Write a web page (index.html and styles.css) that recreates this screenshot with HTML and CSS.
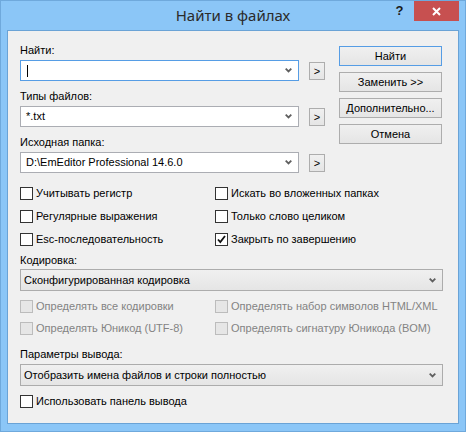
FILE: index.html
```html
<!DOCTYPE html>
<html lang="ru">
<head>
    <meta charset="UTF-8">
    <title>Найти в файлах</title>
    <link rel="stylesheet" href="styles.css">
</head>
<body>
    <div class="window">
        <div class="titlebar">
            <span></span>
            <div class="title">Найти в файлах</div>
            <div class="caption-buttons">
                <span class="help">?</span>
                <span class="close">
                    <svg width="9" height="9" viewBox="0 0 9 9"><path d="M1 1 L8 8 M8 1 L1 8" stroke="#fff" stroke-width="2"/></svg>
                </span>
            </div>
        </div>

        <div class="client">
            <div class="top">
                <div class="fields">
                    <div class="field">
                        <div class="label">Найти:</div>
                        <div class="field-row">
                            <div class="combo focused"><span class="caret"></span>
                                <svg class="chevron" width="7" height="5" viewBox="0 0 7 5"><path d="M0.7 0.7 L3.5 3.5 L6.3 0.7" fill="none" stroke="#5f5f5f" stroke-width="1.8"/></svg>
                            </div>
                            <button class="more">&gt;</button>
                        </div>
                    </div>
                    <div class="field">
                        <div class="label">Типы файлов:</div>
                        <div class="field-row">
                            <div class="combo"><span class="value">*.txt</span>
                                <svg class="chevron" width="7" height="5" viewBox="0 0 7 5"><path d="M0.7 0.7 L3.5 3.5 L6.3 0.7" fill="none" stroke="#5f5f5f" stroke-width="1.8"/></svg>
                            </div>
                            <button class="more">&gt;</button>
                        </div>
                    </div>
                    <div class="field">
                        <div class="label">Исходная папка:</div>
                        <div class="field-row">
                            <div class="combo"><span class="value">D:\EmEditor Professional 14.6.0</span>
                                <svg class="chevron" width="7" height="5" viewBox="0 0 7 5"><path d="M0.7 0.7 L3.5 3.5 L6.3 0.7" fill="none" stroke="#5f5f5f" stroke-width="1.8"/></svg>
                            </div>
                            <button class="more">&gt;</button>
                        </div>
                    </div>
                </div>

                <div class="actions">
                    <button class="btn default">Найти</button>
                    <button class="btn">Заменить &gt;&gt;</button>
                    <button class="btn">Дополнительно...</button>
                    <button class="btn">Отмена</button>
                </div>
            </div>

            <div class="options">
                <div class="check"><span class="box"></span>Учитывать регистр</div>
                <div class="check"><span class="box"></span>Искать во вложенных папках</div>
                <div class="check"><span class="box"></span>Регулярные выражения</div>
                <div class="check"><span class="box"></span>Только слово целиком</div>
                <div class="check"><span class="box"></span>Esc-последовательность</div>
                <div class="check"><span class="box">
                    <svg width="11" height="11" viewBox="0 0 11 11"><path d="M2 5.5 L4.3 8 L9 2" fill="none" stroke="#111" stroke-width="1.8"/></svg>
                </span>Закрыть по завершению</div>
            </div>

            <div class="label section-label">Кодировка:</div>
            <div class="dropdown">
                <span class="value">Сконфигурированная кодировка</span>
                <svg class="chevron" width="7" height="5" viewBox="0 0 7 5"><path d="M0.7 0.7 L3.5 3.5 L6.3 0.7" fill="none" stroke="#5f5f5f" stroke-width="1.8"/></svg>
            </div>

            <div class="options disabled">
                <div class="check"><span class="box"></span>Определять все кодировки</div>
                <div class="check"><span class="box"></span>Определять набор символов HTML/XML</div>
                <div class="check"><span class="box"></span>Определять Юникод (UTF-8)</div>
                <div class="check"><span class="box"></span>Определять сигнатуру Юникода (BOM)</div>
            </div>

            <div class="label output-label">Параметры вывода:</div>
            <div class="dropdown">
                <span class="value">Отобразить имена файлов и строки полностью</span>
                <svg class="chevron" width="7" height="5" viewBox="0 0 7 5"><path d="M0.7 0.7 L3.5 3.5 L6.3 0.7" fill="none" stroke="#5f5f5f" stroke-width="1.8"/></svg>
            </div>

            <div class="check last"><span class="box"></span>Использовать панель вывода</div>
        </div>
    </div>
</body>
</html>
```

FILE: styles.css
```css
body {
    margin: 0;
    font-family: "Liberation Sans", Arial, sans-serif;
    font-size: 11px;
    color: #000;
}

.window {
    width: 466px;
    height: 432px;
    box-sizing: border-box;
    border: 1px solid #6fa9dc;
    background: #8bc6f7;
    padding: 0 6px 7px;
    display: flex;
    flex-direction: column;
}

/* title bar */
.titlebar {
    height: 29px;
    flex-shrink: 0;
    display: grid;
    grid-template-columns: 1fr auto 1fr;
}

.title {
    font-family: "Noto Sans", "Open Sans", sans-serif;
    font-size: 15px;
    line-height: 29px;
    color: #2b2b2b;
}

.caption-buttons {
    justify-self: end;
    display: flex;
    align-items: flex-start;
}

.help {
    width: 27px;
    margin-right: 1px;
    height: 20px;
    line-height: 20px;
    text-align: center;
    font-weight: bold;
    font-size: 13px;
    color: #1a1a1a;
}

.close {
    width: 45px;
    height: 20px;
    background: #c75050;
    display: flex;
    align-items: center;
    justify-content: center;
}

/* client area */
.client {
    flex: 1;
    background: #f0f0f0;
    border: 1px solid #6aa3d6;
    padding: 13px 16px 0 12px;
}

.label {
    line-height: 13px;
    height: 13px;
}

.top {
    display: flex;
}

.fields {
    width: 305px;
}

.field {
    display: flex;
    flex-direction: column;
    gap: 3px;
}

.field + .field {
    margin-top: 9px;
}

.field-row {
    display: flex;
    align-items: center;
    gap: 10px;
}

.combo {
    box-sizing: border-box;
    width: 279px;
    height: 21px;
    border: 1px solid #abadb3;
    background: #fff;
    display: flex;
    align-items: center;
    padding-left: 5px;
    line-height: 13px;
}

.combo.focused {
    border-color: #569de5;
}

.caret {
    width: 1px;
    height: 12px;
    background: #000;
    margin-left: 1px;
}

.chevron {
    margin-left: auto;
    margin-right: 6px;
    flex-shrink: 0;
}

.more {
    box-sizing: border-box;
    width: 16px;
    height: 18px;
    padding: 0;
    border: 1px solid #adadad;
    background: linear-gradient(#f0f0f0, #e5e5e5);
    font: inherit;
    line-height: 14px;
    color: #000;
}

.actions {
    margin-left: 14px;
    margin-top: 2px;
    width: 103px;
    display: flex;
    flex-direction: column;
    gap: 6px;
}

.btn {
    box-sizing: border-box;
    height: 20px;
    padding: 0;
    border: 1px solid #adadad;
    background: linear-gradient(#f0f0f0, #e5e5e5);
    font: inherit;
    color: #000;
}

.btn.default {
    border-color: #569de5;
}

/* check boxes */
.options {
    display: grid;
    grid-template-columns: 195px 1fr;
    row-gap: 10px;
    margin-top: 14px;
}

.check {
    display: flex;
    align-items: center;
    gap: 3px;
    height: 13px;
    line-height: 13px;
    white-space: nowrap;
}

.box {
    box-sizing: border-box;
    width: 13px;
    height: 13px;
    border: 1px solid #333;
    background: #fff;
    flex-shrink: 0;
    display: flex;
}

.options.disabled {
    margin-top: 9px;
    row-gap: 9px;
    color: #838383;
}

.options.disabled .box {
    border-color: #bcbcbc;
    background: #e6e6e6;
}

.section-label {
    margin-top: 8px;
    margin-bottom: 2px;
}

.output-label {
    margin-top: 13px;
    margin-bottom: 3px;
}

.dropdown {
    box-sizing: border-box;
    width: 423px;
    height: 22px;
    border: 1px solid #acacac;
    background: linear-gradient(#f0f0f0, #e5e5e5);
    display: flex;
    align-items: center;
    padding-left: 3px;
    line-height: 13px;
}

.check.last {
    margin-top: 9px;
}
```
